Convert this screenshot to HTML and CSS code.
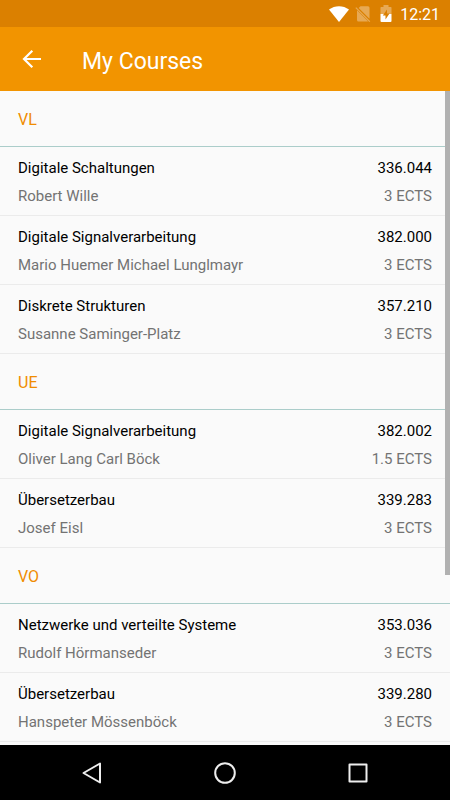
FILE: index.html
```html
<!DOCTYPE html>
<html lang="de">
<head>
<meta charset="utf-8">
<meta name="viewport" content="width=device-width, initial-scale=1">
<title>My Courses</title>
<link rel="stylesheet" href="styles.css">
</head>
<body>
<div class="status-bar">
  <svg class="status-wifi" viewBox="0 0 20 16" width="20" height="16" aria-hidden="true"><path d="M0 3.5C5.800-1 14.200-1 20 3.500L10 16z" fill="#fff"/></svg>
  <svg class="status-sim" viewBox="0 0 16 16" width="16" height="16" aria-hidden="true"><path d="M5.500.300H13q1.500 0 1.500 1.500V12.800L3.700 2zM2 4.200L13 15.200q-.4.300-1.200.3H3.500Q2 15.500 2 14z" fill="#e7a954"/><path d="M.8 1.700L14.800 15.700" stroke="#e7a954" stroke-width="1.200"/></svg>
  <svg class="status-battery" viewBox="0 0 12 17" width="12" height="17" aria-hidden="true"><path d="M1 2H3.500V0H8.500V2H11Q11.500 2 11.500 3V9H.5V3Q.5 2 1 2z" fill="#e7a954"/><path d="M.5 9H11.500V16Q11.500 17 10.500 17H1.500Q.5 17 .5 16z" fill="#fff"/><path d="M7 4.500L2.800 10.500H5.500V14.500L9.500 8.500H7z" fill="#db8000"/></svg>
  <time class="status-time">12:21</time>
</div>
<header class="toolbar">
  <button class="back-button" type="button" aria-label="Back">
    <svg viewBox="0 0 20 20" width="20" height="20" aria-hidden="true"><path d="M19 10H2M10.300 1.700L2 10L10.300 18.300" fill="none" stroke="#fff" stroke-width="2.200"/></svg>
  </button>
  <h1 class="toolbar-title">My Courses</h1>
</header>
<main class="content">
  <section>
    <h2 class="group-title">VL</h2>
    <ul class="course-list">
      <li class="course"><div class="line"><span>Digitale Schaltungen</span><span>336.044</span></div><div class="line detail"><span>Robert Wille</span><span>3 ECTS</span></div></li>
      <li class="course"><div class="line"><span>Digitale Signalverarbeitung</span><span>382.000</span></div><div class="line detail"><span>Mario Huemer Michael Lunglmayr</span><span>3 ECTS</span></div></li>
      <li class="course"><div class="line"><span>Diskrete Strukturen</span><span>357.210</span></div><div class="line detail"><span>Susanne Saminger-Platz</span><span>3 ECTS</span></div></li>
    </ul>
  </section>
  <section>
    <h2 class="group-title">UE</h2>
    <ul class="course-list">
      <li class="course"><div class="line"><span>Digitale Signalverarbeitung</span><span>382.002</span></div><div class="line detail"><span>Oliver Lang Carl Böck</span><span>1.5 ECTS</span></div></li>
      <li class="course"><div class="line"><span>Übersetzerbau</span><span>339.283</span></div><div class="line detail"><span>Josef Eisl</span><span>3 ECTS</span></div></li>
    </ul>
  </section>
  <section>
    <h2 class="group-title">VO</h2>
    <ul class="course-list">
      <li class="course"><div class="line"><span>Netzwerke und verteilte Systeme</span><span>353.036</span></div><div class="line detail"><span>Rudolf Hörmanseder</span><span>3 ECTS</span></div></li>
      <li class="course"><div class="line"><span>Übersetzerbau</span><span>339.280</span></div><div class="line detail"><span>Hanspeter Mössenböck</span><span>3 ECTS</span></div></li>
    </ul>
  </section>
  <div class="scroll-thumb"></div>
</main>
<nav class="nav-bar" aria-label="System">
  <button class="nav-button" type="button" aria-label="Back"><svg viewBox="0 0 24 24" width="24" height="24"><path d="M20 2.500V21.500L3.500 12z"/></svg></button>
  <button class="nav-button" type="button" aria-label="Home"><svg viewBox="0 0 24 24" width="24" height="24"><circle cx="12" cy="12" r="9.800"/></svg></button>
  <button class="nav-button" type="button" aria-label="Overview"><svg viewBox="0 0 24 24" width="24" height="24"><rect x="3.500" y="3.500" width="17" height="17"/></svg></button>
</nav>
</body>
</html>
```
FILE: styles.css
```css
* {
  box-sizing: border-box;
}

body {
  margin: 0;
  height: 100vh;
  display: flex;
  flex-direction: column;
  background: #fafafa;
  color: #000;
  font-family: Roboto, "Liberation Sans", sans-serif;
  font-size: 15px;
}

h1,
h2,
ul {
  margin: 0;
  padding: 0;
  font-weight: 400;
  list-style: none;
}

button {
  display: flex;
  align-items: center;
  justify-content: center;
  padding: 0;
  border: 0;
  background: none;
}

.status-bar {
  flex: none;
  display: flex;
  align-items: center;
  justify-content: flex-end;
  height: 27px;
  padding-right: 10px;
  background: #db8000;
  color: #fff;
}

.status-sim {
  margin-left: 6px;
}

.status-battery {
  margin-left: 9px;
}

.status-time {
  margin-left: 8px;
  font-size: 16px;
  line-height: 28px;
  padding-top: 2px;
}

.toolbar {
  flex: none;
  display: flex;
  align-items: center;
  height: 64px;
  background: #f29400;
  color: #fff;
}

.back-button {
  width: 64px;
  height: 64px;
}

.toolbar-title {
  padding-top: 6px;
  padding-left: 18px;
  font-size: 23px;
  line-height: 32px;
}

.content {
  position: relative;
  flex: 1;
  min-height: 0;
  overflow: hidden;
}

.group-title {
  height: 56px;
  padding: 0 18px;
  border-bottom: 1px solid #abcdca;
  color: #f08c00;
  font-size: 16px;
  line-height: 58px;
}

.course {
  height: 69px;
  padding: 7px 18px 0;
  border-bottom: 1px solid #ebebeb;
}

.line {
  display: flex;
  justify-content: space-between;
  line-height: 28px;
}

.detail {
  color: #737373;
}

.scroll-thumb {
  position: absolute;
  top: 0;
  right: 0;
  width: 5px;
  height: 74%;
  background: #b1b1b1;
}

.nav-bar {
  flex: none;
  display: flex;
  justify-content: center;
  height: 55px;
  background: #000;
}

.nav-button {
  width: 133px;
}

.nav-button svg {
  fill: none;
  stroke: #eee;
  stroke-width: 2;
  stroke-linejoin: round;
}
```
